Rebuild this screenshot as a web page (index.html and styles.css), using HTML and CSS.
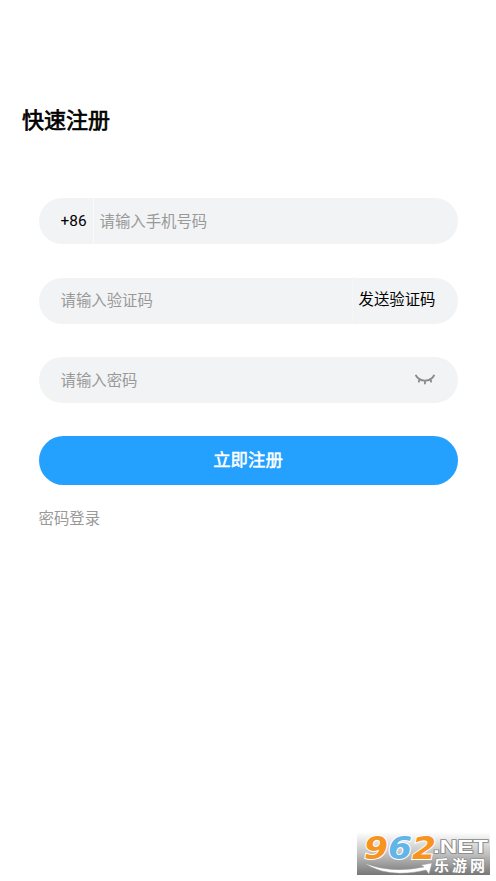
FILE: index.html
```html
<!DOCTYPE html>
<html lang="zh-CN">
<head>
<meta charset="utf-8">
<title>快速注册</title>
<link rel="stylesheet" href="styles.css">
</head>
<body>
<main class="page">
  <h1 class="title">快速注册</h1>
  <form class="form">
    <div class="field">
      <span class="prefix">+86</span>
      <span class="hint hint-phone">请输入手机号码</span>
    </div>
    <div class="field">
      <span class="hint hint-code">请输入验证码</span>
      <span class="send">发送验证码</span>
    </div>
    <div class="field">
      <span class="hint">请输入密码</span>
      <svg class="eye" viewBox="0 0 20 12" width="20" height="12">
        <path d="M1 1.5C4.5 8.3 15.5 8.3 19 1.5M4.7 5L3.9 7.6M10 6.8V9.5M15.3 5L16.1 7.6"/>
      </svg>
    </div>
    <button class="submit" type="button">立即注册</button>
    <a class="login">密码登录</a>
  </form>
</main>
<svg class="brand" viewBox="0 0 133 43" width="133" height="43">
  <defs>
    <linearGradient id="shade" x1="0" y1="0" x2="0" y2="1">
      <stop offset="0" stop-color="#fff"/>
      <stop offset="0.5" stop-color="#c2c2c2"/>
      <stop offset="1" stop-color="#777"/>
    </linearGradient>
  </defs>
  <rect width="133" height="43" fill="url(#shade)"/>
  <path class="swoosh" d="M7 31Q34 42 67 35L64 33L75 31L72 42L69 38Q31 47 7 31Z"/>
  <text class="digits" x="7" y="26.5" textLength="72" lengthAdjust="spacingAndGlyphs"><tspan class="orange">9</tspan><tspan class="blue">6</tspan><tspan class="orange">2</tspan></text>
  <text class="net" x="76" y="20.5" textLength="55" lengthAdjust="spacingAndGlyphs">.NET</text>
  <text class="name" x="77" y="38.5" textLength="51">乐游网</text>
</svg>
</body>
</html>
```
FILE: styles.css
```css
* { box-sizing: border-box; }
body {
  margin: 0;
  height: 881px;
  overflow: hidden;
  background: #fff;
  color: #000;
  font-family: Roboto, "Noto Sans CJK SC", sans-serif;
  font-size: 15.4px;
}
.page { padding-top: 104px; }
.title {
  margin: 0 0 0 22px;
  font-size: 22px;
  line-height: 34px;
  font-weight: 400;
  -webkit-text-stroke: 0.7px #000;
}
.form {
  display: flex;
  flex-direction: column;
  width: 419px;
  margin: 60px 0 0 38.5px;
}
.field {
  display: flex;
  align-items: center;
  height: 46px;
  margin-bottom: 33.5px;
  padding: 0 22px;
  border-radius: 23px;
  background: #f2f3f5;
}
.prefix {
  width: 33px;
  line-height: 46px;
  border-right: 1px solid #f9fafb;
}
.hint { color: #999; padding-bottom: 2px; }
.hint-phone { padding-left: 6px; }
.hint-code { padding-bottom: 4px; }
.send {
  margin-left: auto;
  padding-left: 6px;
  line-height: 46px;
  border-left: 1px solid #f5f6f8;
  position: relative;
  top: -1px;
}
.eye {
  margin: 0 1px 1px auto;
  fill: none;
  stroke: #8c8c8c;
  stroke-width: 1.9;
  stroke-linecap: round;
}
.submit {
  height: 49px;
  margin-top: -1px;
  padding: 0 0 3px;
  border: 0;
  border-radius: 24.5px;
  background: #24a0ff;
  color: #fff;
  font-family: inherit;
  font-size: 17.4px;
  -webkit-text-stroke: 0.5px #fff;
}
.login {
  margin-top: 23px;
  line-height: 23px;
  color: #999;
}
.brand {
  position: absolute;
  left: 357px;
  top: 832px;
  overflow: visible;
}
.digits {
  font: italic 700 32px "DejaVu Sans", sans-serif;
  stroke: #fff;
  stroke-width: 2;
  paint-order: stroke;
}
.orange { fill: #f7931e; }
.blue { fill: #62b5e8; }
.net {
  font: 700 18px "Liberation Sans", sans-serif;
  fill: #fff;
  stroke: #858585;
  stroke-width: 1.5;
  paint-order: stroke;
}
.name {
  font: 700 15px "Noto Sans CJK SC", sans-serif;
  fill: #fff;
  stroke: #858585;
  stroke-width: 1;
  paint-order: stroke;
}
.swoosh { fill: #fff; stroke: #999; stroke-width: 0.5; }
```
